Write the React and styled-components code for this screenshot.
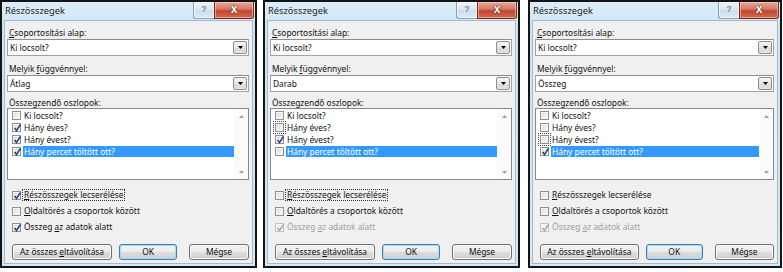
import React from "react";
import styled, { createGlobalStyle } from "styled-components";

const GlobalStyle = createGlobalStyle`
  html, body { margin: 0; padding: 0; background: #fff; }
  body {
    font-family: "Noto Sans", "Liberation Sans", sans-serif;
    font-size: 8.4px;
    color: #111;
  }
`;

const columns = ["Ki locsolt?", "Hány éves?", "Hány évest?", "Hány percet töltött ott?"];

const dialogs = [
  {
    width: 257, gap: 0, func: "Átlag", cols: [false, true, true, true], focusCol: -1,
    replace: true, replaceFocus: true, pageBreak: false, below: true, belowDisabled: false,
  },
  {
    width: 257, gap: 6, func: "Darab", cols: [false, false, true, false], focusCol: 1,
    replace: false, replaceFocus: true, pageBreak: false, below: true, belowDisabled: true,
  },
  {
    width: 254, gap: 8, func: "Összeg", cols: [false, false, false, true], focusCol: 2,
    replace: false, replaceFocus: false, pageBreak: false, below: true, belowDisabled: true,
  },
];

const Page = styled.div`
  display: flex;
  align-items: flex-start;
`;

const Dialog = styled.div`
  box-sizing: border-box;
  width: ${(p) => p.$width}px;
  margin-left: ${(p) => p.$gap}px;
  height: 268px;
  border: 2px solid #141414;
  background: linear-gradient(#dcedf8, #cde4f3 30px, #d4e9f6);
  display: flex;
  flex-direction: column;
`;

const TitleBar = styled.div`
  height: 18px;
  display: flex;
  align-items: flex-start;
  padding: 0 1px 0 3px;
`;

const Title = styled.div`
  flex: 1;
  font-size: 9.3px;
  line-height: 17px;
  color: #1b1b1b;
`;

const HelpButton = styled.div`
  box-sizing: border-box;
  width: 21px;
  height: 17px;
  border: 1px solid #8aa0b8;
  border-top: none;
  border-right: none;
  border-radius: 0 0 0 3px;
  background: linear-gradient(#eef4fa, #dbe6f2 50%, #cddcec 51%, #dce8f4);
  box-shadow: inset 0 0 0 1px rgba(255, 255, 255, 0.6);
  color: #7488a0;
  font-family: "Liberation Sans", sans-serif;
  font-weight: bold;
  font-size: 9px;
  line-height: 15px;
  text-align: center;
`;

const CloseButton = styled.div`
  box-sizing: border-box;
  width: 40px;
  height: 17px;
  border: 1px solid #7a2a1c;
  border-top: none;
  border-radius: 0 0 3px 0;
  background: linear-gradient(#e9a99a, #d47864 45%, #c2452d 55%, #d46a52);
  box-shadow: inset 0 0 0 1px rgba(255, 220, 210, 0.5);
  color: #fff;
  font-family: "Liberation Sans", sans-serif;
  font-weight: bold;
  font-size: 12px;
  line-height: 14px;
  text-align: center;
  text-shadow: 0 0 2px #5a1a10, 0 0 1px #5a1a10;
`;

const Client = styled.div`
  flex: 1;
  margin: 0 2px 2px 2px;
  border: 1px solid #a3bace;
  background: #f0f0f0;
  padding: 0 3px 0 2px;
  display: flex;
  flex-direction: column;
`;

const Label = styled.div`
  height: 11px;
  line-height: 11px;
  margin-top: ${(p) => p.$top}px;
  padding-left: 2px;
  white-space: nowrap;
`;

const Key = styled.span`
  text-decoration: underline;
`;

const Combo = styled.div`
  box-sizing: border-box;
  height: 17px;
  margin-top: 1px;
  border: 1px solid #a2a2a2;
  border-top-color: #8c8c8c;
  background: #fff;
  display: flex;
  align-items: center;
  padding: 0 1px 0 2px;
`;

const ComboValue = styled.div`
  flex: 1;
  line-height: 13px;
`;

const DropButton = styled.div`
  box-sizing: border-box;
  width: 14px;
  height: 13px;
  border: 1px solid #8e8e8e;
  border-radius: 2px;
  background: linear-gradient(#f5f5f5, #e6e6e6 50%, #d8d8d8 51%, #e3e3e3);
  display: flex;
  align-items: center;
  justify-content: center;
`;

const ListBox = styled.div`
  box-sizing: border-box;
  height: 72px;
  border: 1px solid #828790;
  background: #fff;
  display: flex;
`;

const ListItems = styled.div`
  flex: 1;
`;

const ListRow = styled.div`
  height: 12px;
  display: flex;
  align-items: center;
  padding-left: 4px;
`;

const ItemText = styled.div`
  flex: 1;
  margin-left: 2px;
  height: 11px;
  line-height: 11px;
  padding-left: 1px;
  background: ${(p) => (p.$selected ? "#3399ff" : "transparent")};
  color: ${(p) => (p.$selected ? "#fff" : "#111")};
  white-space: nowrap;
`;

const ScrollBar = styled.div`
  width: 14px;
  display: flex;
  flex-direction: column;
  justify-content: space-between;
  align-items: center;
  padding: 6px 0 5px;
  background: #fbfbfb;
`;

const Box = styled.div`
  box-sizing: border-box;
  position: relative;
  width: 9px;
  height: 9px;
  flex: none;
  border: 1px solid ${(p) => (p.$disabled ? "#c2c2c2" : "#8e8f8f")};
  background: ${(p) =>
    p.$disabled ? "#f4f4f4" : "linear-gradient(135deg, #d6d6d6, #f2f2f2 70%, #fdfdfd)"};
  box-shadow: inset 0 0 0 1px #f7f7f7;
  outline: ${(p) => (p.$focus ? "1px dotted #444" : "none")};
  outline-offset: 1px;
  svg {
    position: absolute;
    left: -1px;
    top: -2px;
  }
`;

const Checks = styled.div`
  margin-top: 7px;
  display: flex;
  flex-direction: column;
`;

const CheckRow = styled.div`
  height: 16px;
  display: flex;
  align-items: center;
  padding-left: 5px;
`;

const CheckText = styled.div`
  margin-left: 2px;
  padding: 0 1px;
  line-height: 10px;
  white-space: nowrap;
  color: ${(p) => (p.$disabled ? "#a0a0a0" : "#111")};
  outline: ${(p) => (p.$focus ? "1px dotted #333" : "none")};
`;

const ButtonRow = styled.div`
  margin-top: 9px;
  display: flex;
  padding-left: 5px;
`;

const PushButton = styled.div`
  box-sizing: border-box;
  width: ${(p) => p.$w}px;
  margin-left: ${(p) => p.$ml}px;
  height: 16px;
  border: 1px solid ${(p) => (p.$default ? "#3c7fb1" : "#707070")};
  border-radius: 3px;
  background: linear-gradient(#f2f2f2, #ebebeb 50%, #dddddd 51%, #cfcfcf);
  box-shadow: inset 0 0 0 1px ${(p) => (p.$default ? "#a8dcf5" : "#fcfcfc")};
  text-align: center;
  line-height: 14px;
  white-space: nowrap;
`;

const Check = ({ checked, disabled, focus }) => (
  <Box $disabled={disabled} $focus={focus}>
    {checked && (
      <svg width="11" height="11" viewBox="0 0 11 11">
        <path
          d="M2.5 6 L4.5 8.5 L8.5 2.5"
          fill="none"
          stroke={disabled ? "#a5a5a5" : "#1f3d7a"}
          strokeWidth="1.4"
        />
      </svg>
    )}
  </Box>
);

const Arrow = ({ down, color = "#000", w = 5, h = 3 }) => (
  <svg width={w} height={h} viewBox={`0 0 ${w} ${h}`}>
    <polygon
      points={down ? `0,0 ${w},0 ${w / 2},${h}` : `0,${h} ${w},${h} ${w / 2},0`}
      fill={color}
    />
  </svg>
);

const SubtotalDialog = ({ d }) => (
  <Dialog $width={d.width} $gap={d.gap}>
    <TitleBar>
      <Title>Részösszegek</Title>
      <HelpButton>?</HelpButton>
      <CloseButton>x</CloseButton>
    </TitleBar>
    <Client>
      <Label $top={6}>
        <Key>C</Key>soportosítási alap:
      </Label>
      <Combo>
        <ComboValue>Ki locsolt?</ComboValue>
        <DropButton>
          <Arrow down />
        </DropButton>
      </Combo>
      <Label $top={7}>
        Melyik <Key>f</Key>üggvénnyel:
      </Label>
      <Combo>
        <ComboValue>{d.func}</ComboValue>
        <DropButton>
          <Arrow down />
        </DropButton>
      </Combo>
      <Label $top={5}>Összegzendő oszlopok:</Label>
      <ListBox>
        <ListItems>
          {columns.map((c, i) => (
            <ListRow key={c}>
              <Check checked={d.cols[i]} focus={d.focusCol === i} />
              <ItemText $selected={i === 3}>{c}</ItemText>
            </ListRow>
          ))}
        </ListItems>
        <ScrollBar>
          <Arrow color="#a3a3a3" />
          <Arrow down color="#a3a3a3" />
        </ScrollBar>
      </ListBox>
      <Checks>
        <CheckRow>
          <Check checked={d.replace} />
          <CheckText $focus={d.replaceFocus}>
            <Key>R</Key>észösszegek lecserélése
          </CheckText>
        </CheckRow>
        <CheckRow>
          <Check checked={d.pageBreak} />
          <CheckText>
            <Key>O</Key>ldaltörés a csoportok között
          </CheckText>
        </CheckRow>
        <CheckRow>
          <Check checked={d.below} disabled={d.belowDisabled} />
          <CheckText $disabled={d.belowDisabled}>
            Összeg <Key>a</Key>z adatok alatt
          </CheckText>
        </CheckRow>
      </Checks>
      <ButtonRow>
        <PushButton $w={100} $ml={0}>
          Az összes <Key>e</Key>ltávolítása
        </PushButton>
        <PushButton $w={58} $ml={7} $default>
          OK
        </PushButton>
        <PushButton $w={60} $ml={12}>
          Mégse
        </PushButton>
      </ButtonRow>
    </Client>
  </Dialog>
);

export default function App() {
  return (
    <>
      <GlobalStyle />
      <Page>
        {dialogs.map((d, i) => (
          <SubtotalDialog key={i} d={d} />
        ))}
      </Page>
    </>
  );
}
